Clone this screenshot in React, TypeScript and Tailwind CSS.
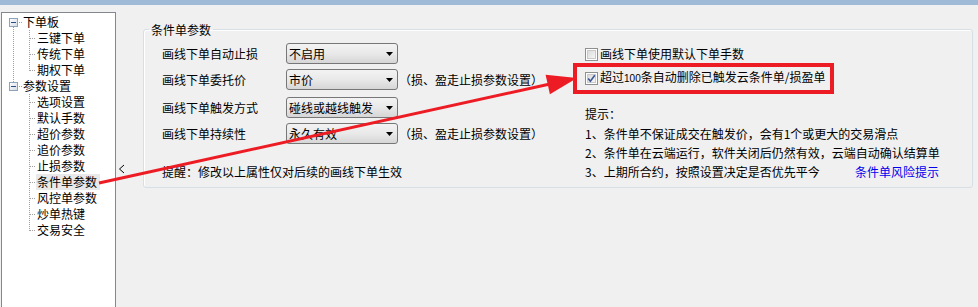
import React from "react";

const treeRows: { t: string; root?: boolean; sel?: boolean }[] = [
  { t: "下单板", root: true },
  { t: "三键下单" },
  { t: "传统下单" },
  { t: "期权下单" },
  { t: "参数设置", root: true },
  { t: "选项设置" },
  { t: "默认手数" },
  { t: "超价参数" },
  { t: "追价参数" },
  { t: "止损参数" },
  { t: "条件单参数", sel: true },
  { t: "风控单参数" },
  { t: "炒单热键" },
  { t: "交易安全" },
];

const yc = (i: number) => 9 + 16 * i;

function TreeLines() {
  const dot = { stroke: "#a0a0a0", strokeWidth: 1, strokeDasharray: "1 1", shapeRendering: "crispEdges" as const };
  const roots = [0, 4];
  return (
    <svg className="absolute left-0 top-0" width={113} height={240}>
      <defs>
        <linearGradient id="exp" x1="0" y1="0" x2="1" y2="1">
          <stop offset="0" stopColor="#ffffff" />
          <stop offset="1" stopColor="#d4dbe4" />
        </linearGradient>
      </defs>
      {/* root vertical */}
      <line x1={11.5} y1={yc(0) + 5} x2={11.5} y2={yc(4) - 4} {...dot} />
      {/* children verticals */}
      <line x1={27.5} y1={yc(0) + 8} x2={27.5} y2={yc(3) + 1} {...dot} />
      <line x1={27.5} y1={yc(4) + 8} x2={27.5} y2={yc(13) + 1} {...dot} />
      {treeRows.map((r, i) =>
        r.root ? (
          <line key={i} x1={17} y1={yc(i) + 0.5} x2={21} y2={yc(i) + 0.5} {...dot} />
        ) : (
          <line key={i} x1={28} y1={yc(i) + 0.5} x2={34} y2={yc(i) + 0.5} {...dot} />
        )
      )}
      {roots.map((i) => (
        <g key={i}>
          <rect x={7.5} y={yc(i) - 3.5} width={8} height={8} fill="url(#exp)" stroke="#8fa2ba" shapeRendering="crispEdges" />
          <line x1={9} y1={yc(i) + 0.5} x2={14} y2={yc(i) + 0.5} stroke="#2d4b86" strokeWidth={1} shapeRendering="crispEdges" />
        </g>
      ))}
    </svg>
  );
}

function Tree() {
  return (
    <div className="relative ml-[1px] mt-[7px] h-[295px] w-[115px] border-l border-r border-t border-[#828790] bg-white">
      <TreeLines />
      <div className="relative pt-[1px]">
        {treeRows.map((r, i) => (
          <div
            key={i}
            className={`flex h-[16px] items-center whitespace-nowrap ${r.root ? "pl-[21px]" : "pl-[34px]"}`}
          >
            <span
              className={`flex h-[16px] items-center ${r.root ? "" : "pl-[1px] pr-[3px]"} ${r.sel ? "bg-[#e9e9e9]" : ""}`}
            >
              {r.t}
            </span>
          </div>
        ))}
      </div>
    </div>
  );
}

function Select({ text }: { text: string }) {
  return (
    <div className="flex h-[21px] w-[112px] shrink-0 items-center rounded-[3px] border border-[#777777] bg-linear-to-b from-[#f3f3f3] via-[#e9e9e9] to-[#d6d6d6] pl-[2px]">
      <span className="flex-1 whitespace-nowrap">{text}</span>
      <svg width={7} height={4} className="mr-[4px]">
        <path d="M0 0H7L3.5 4Z" fill="#000" />
      </svg>
    </div>
  );
}

function Row({ label, value, note, mt }: { label: string; value: string; note?: boolean; mt: string }) {
  return (
    <div className={`flex h-[21px] items-center ${mt}`}>
      <span className="w-[124px] shrink-0 whitespace-nowrap">{label}</span>
      <Select text={value} />
      {note && <span className="ml-[1px] whitespace-nowrap">（损、盈走止损参数设置）</span>}
    </div>
  );
}

function Check({ checked }: { checked?: boolean }) {
  return (
    <svg width={13} height={13} className="shrink-0">
      <defs>
        <linearGradient id={checked ? "cbg1" : "cbg0"} x1="0" y1="0" x2="1" y2="1">
          <stop offset="0" stopColor="#d9d9d9" />
          <stop offset="1" stopColor="#f7f7f7" />
        </linearGradient>
      </defs>
      <rect x={0.5} y={0.5} width={12} height={12} fill="#ffffff" stroke="#8e8f8f" shapeRendering="crispEdges" />
      <rect x={2.5} y={2.5} width={8} height={8} fill={`url(#${checked ? "cbg1" : "cbg0"})`} stroke="#c9c9c9" shapeRendering="crispEdges" />
      {checked && (
        <path d="M3.2 6.4 L5.4 9.2 L9.8 3.2" fill="none" stroke="#3b5795" strokeWidth={1.6} />
      )}
    </svg>
  );
}

export default function App() {
  return (
    <div className="relative h-[307px] w-[978px] overflow-hidden bg-[#f0f0f0] font-['Noto_Sans_CJK_SC',sans-serif] text-[12px] leading-[16px] text-black">
      <div className="h-[5px] bg-[#9fbad6]" />
      <div className="flex h-[302px]">
        <Tree />
        <div className="w-[27px] shrink-0 pl-[1px] pt-[159px]">
          <svg width={8} height={10}>
            <polyline points="7,1 2.5,5 7,9" fill="none" stroke="#000" strokeWidth={1} />
          </svg>
        </div>
        <fieldset className="mt-[17px] h-[166px] w-[830px] min-w-0 shrink-0 rounded-[3px] border border-[#d5dfe5] shadow-[inset_1px_1px_0_#ffffff]">
          <legend className="ml-[5px] px-[2px] leading-[15px]">条件单参数</legend>
          <div className="flex">
            <div className="w-[441px] shrink-0 pl-[18px]">
              <Row label="画线下单自动止损" value="不启用" mt="mt-[6px]" />
              <Row label="画线下单委托价" value="市价" note mt="mt-[5px]" />
              <Row label="画线下单触发方式" value="碰线或越线触发" mt="mt-[7px]" />
              <Row label="画线下单持续性" value="永久有效" note mt="mt-[5px]" />
              <div className="mt-[20px] flex h-[16px] items-center whitespace-nowrap">
                提醒：修改以上属性仅对后续的画线下单生效
              </div>
            </div>
            <div className="flex-1 whitespace-nowrap">
              <div className="mt-[9px] flex h-[16px] items-center gap-[2px]">
                <Check />
                <span>画线下单使用默认下单手数</span>
              </div>
              <div className="mt-[8px] flex h-[16px] items-center gap-[2px]">
                <Check checked />
                <span>
                  超过<span className="font-['Liberation_Sans',sans-serif] text-[10px]">100</span>条自动删除已触发云条件单/损盈单
                </span>
              </div>
              <div className="mt-[18px] flex h-[20px] items-center">提示：</div>
              <div className="flex h-[19px] items-center">1、条件单不保证成交在触发价，会有1个或更大的交易滑点</div>
              <div className="flex h-[19px] items-center">2、条件单在云端运行，软件关闭后仍然有效，云端自动确认结算单</div>
              <div className="flex h-[20px] items-center">
                <span className="w-[270px] shrink-0">3、上期所合约，按照设置决定是否优先平今</span>
                <span className="text-[#0000ee]">条件单风险提示</span>
              </div>
            </div>
          </div>
        </fieldset>
      </div>
      <svg className="pointer-events-none absolute left-0 top-0" width={978} height={307}>
        <rect x={575} y={65} width={257} height={27} fill="none" stroke="#ed1c24" strokeWidth={4} />
        <line x1={99} y1={183} x2={550} y2={84} stroke="#ed1c24" strokeWidth={3} />
        <polygon points="577,78 549.9,94.2 545.6,74.7" fill="#ed1c24" />
      </svg>
    </div>
  );
}
